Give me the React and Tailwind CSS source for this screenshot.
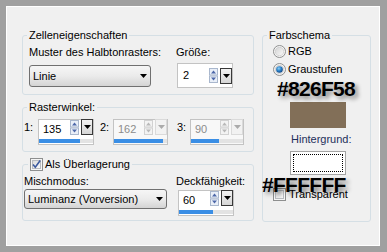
import React from "react";

function Tri({ color = "#000" }) {
  return (
    <svg width="7" height="4" viewBox="0 0 7 4">
      <path d="M0 0H7L3.5 4Z" fill={color} />
    </svg>
  );
}

function Spinner({ disabled }) {
  const bg = disabled ? "#f3f3f3" : "#e9eff8";
  const st = disabled ? "#d2d2d2" : "#a9b7cd";
  const ar = disabled ? "#b8b8b8" : "#4c67a8";
  return (
    <svg width="9" height="15" viewBox="0 0 9 15">
      <rect x="0.5" y="0.5" width="8" height="6.5" fill={bg} stroke={st} />
      <rect x="0.5" y="8" width="8" height="6.5" fill={bg} stroke={st} />
      <path d="M2 5.5L4.5 2.5L7 5.5Z" fill={ar} />
      <path d="M2 9.5L4.5 12.5L7 9.5Z" fill={ar} />
    </svg>
  );
}

function DropBtn({ disabled }) {
  return (
    <div
      className={
        disabled
          ? "w-[12px] h-[16px] flex items-center justify-center border border-[#dadada] bg-[#f2f2f2]"
          : "w-[12px] h-[16px] flex items-center justify-center border border-[#383838] bg-linear-to-b from-[#f2f2f2] to-[#d6d6d6]"
      }
    >
      <svg width="7" height="4" viewBox="0 0 7 4">
        <path d="M0 0H7L3.5 4Z" fill={disabled ? "#ababab" : "#000"} />
      </svg>
    </div>
  );
}

function BarField({ value, bar, disabled, width }) {
  return (
    <div
      className={
        (disabled ? "bg-[#f8f8f8] " : "bg-white ") +
        width +
        " h-[26px] border border-[#c3c3c3] flex flex-col"
      }
    >
      <div className="h-[19px] flex items-start">
        <div
          className={
            disabled
              ? "flex-1 h-full flex items-center pl-[4px] text-[#8c8c8c]"
              : "flex-1 h-full flex items-center pl-[4px] text-black"
          }
        >
          {value}
        </div>
        <Spinner disabled={disabled} />
        <div className="ml-[2px] -mt-[1px]">
          <DropBtn disabled={disabled} />
        </div>
      </div>
      <div className="h-[4px] bg-[#e3e3e3] flex">
        <div className={bar + " h-full bg-[#3a8ee5]"} />
      </div>
    </div>
  );
}

function SpinField({ value }) {
  return (
    <div className="w-[56px] h-[25px] border border-[#c3c3c3] bg-white flex items-center">
      <div className="flex-1 pl-[5px]">{value}</div>
      <Spinner />
      <div className="ml-[2px]">
        <DropBtn />
      </div>
    </div>
  );
}

function Combo({ cls, text }) {
  return (
    <div
      className={
        cls +
        " border border-[#707070] rounded-[3px] bg-linear-to-b from-[#f6f6f6] via-[#ebebeb] to-[#d4d4d4] flex items-center justify-between pl-[3px] pr-[3px]"
      }
    >
      <span>{text}</span>
      <Tri />
    </div>
  );
}

function CheckBox({ checked, id }) {
  return (
    <svg width="13" height="13" viewBox="0 0 13 13">
      <defs>
        <linearGradient id={id} x1="0" y1="0" x2="1" y2="1">
          <stop offset="0" stopColor="#d9d9d9" />
          <stop offset="1" stopColor="#fbfbfb" />
        </linearGradient>
      </defs>
      <rect x="0.5" y="0.5" width="12" height="12" fill="#f6f6f6" stroke="#8e8f8f" />
      <rect x="2.5" y="2.5" width="8" height="8" fill={`url(#${id})`} stroke="#b9bcc0" />
      {checked && (
        <path d="M3 6.5L5.3 9.2L10.2 2.6" fill="none" stroke="#3c5a9e" strokeWidth="1.6" />
      )}
    </svg>
  );
}

function Radio({ checked, id }) {
  return (
    <svg width="13" height="13" viewBox="0 0 13 13">
      <defs>
        <linearGradient id={id + "g"} x1="0" y1="0" x2="1" y2="1">
          <stop offset="0" stopColor="#d4d4d4" />
          <stop offset="1" stopColor="#fafafa" />
        </linearGradient>
        <radialGradient id={id + "r"} cx="0.4" cy="0.35" r="0.7">
          <stop offset="0" stopColor="#8fd0f5" />
          <stop offset="0.5" stopColor="#2a82c9" />
          <stop offset="1" stopColor="#0e3e7c" />
        </radialGradient>
      </defs>
      <circle cx="6.5" cy="6.5" r="6" fill="#f4f4f4" stroke="#8e8f8f" />
      <circle cx="6.5" cy="6.5" r="4.2" fill={`url(#${id}g)`} stroke="#c4c4c4" strokeWidth="0.6" />
      {checked && <circle cx="6.5" cy="6.5" r="3.3" fill={`url(#${id}r)`} />}
    </svg>
  );
}

const GROUP = "border border-[#d5dfe5] rounded-[3px]";

export default function App() {
  return (
    <div className="relative w-[387px] h-[252px] bg-[#a0a0a0] pt-[6px] pl-[6px] font-['Liberation_Sans',Arial,sans-serif] text-[11px] leading-[13px] text-black">
      <div className="w-[374px] h-[240px] bg-[#f0f0f0] shadow-[inset_1px_1px_0_#ffffff,inset_-1px_-1px_0_#ffffff] pt-[22px] pl-[16px] flex gap-[8px]">
        <div className="w-[232px] flex flex-col gap-[5px]">
          {/* Zelleneigenschaften */}
          <fieldset className={GROUP + " h-[67px]"}>
            <legend className="ml-[4px] px-[2px] leading-[14px]">Zelleneigenschaften</legend>
            <div className="pl-[6px] pt-[4px] flex">
              <div className="w-[147px]">
                <div>Muster des Halbtonrasters:</div>
                <div className="mt-[6px]">
                  <Combo cls="w-[122px] h-[22px]" text="Linie" />
                </div>
              </div>
              <div>
                <div>Größe:</div>
                <div className="mt-[4px] ml-[1px]">
                  <SpinField value="2" />
                </div>
              </div>
            </div>
          </fieldset>

          {/* Rasterwinkel */}
          <fieldset className={GROUP + " h-[52px]"}>
            <legend className="ml-[4px] px-[2px] leading-[14px]">Rasterwinkel:</legend>
            <div className="pl-[1px] pt-[5px] flex items-start">
              <div className="w-[14px] mt-[2px]">1:</div>
              <BarField value="135" bar="w-[41px]" width="w-[56px]" />
              <div className="w-[13px] ml-[6px] mt-[2px]">2:</div>
              <BarField value="162" bar="w-[49px]" width="w-[55px]" disabled />
              <div className="w-[13px] ml-[9px] mt-[2px]">3:</div>
              <BarField value="90" bar="w-[28px]" width="w-[54px]" disabled />
            </div>
          </fieldset>

          {/* Als Überlagerung */}
          <fieldset className={GROUP + " h-[64px]"}>
            <legend className="ml-[5px] px-[2px] leading-[14px]">
              <div className="flex items-center gap-[2px] h-[14px]">
                <CheckBox checked id="cb1" />
                <span>Als Überlagerung</span>
              </div>
            </legend>
            <div className="pl-[1px] pt-[4px] flex">
              <div className="w-[152px]">
                <div>Mischmodus:</div>
                <div className="mt-[1px]">
                  <Combo cls="w-[143px] h-[20px]" text="Luminanz (Vorversion)" />
                </div>
              </div>
              <div>
                <div>Deckfähigkeit:</div>
                <div className="mt-[2px] ml-[2px]">
                  <BarField value="60" bar="w-[34px]" width="w-[56px]" />
                </div>
              </div>
            </div>
          </fieldset>
        </div>

        {/* Farbschema */}
        <fieldset className={GROUP + " w-[109px] h-[194px]"}>
          <legend className="ml-[4px] px-[2px] leading-[14px]">Farbschema</legend>
          <div className="pl-[10px] pt-[3px] flex flex-col">
            <div className="flex items-center gap-[2px] h-[13px]">
              <Radio id="r1" />
              <span>RGB</span>
            </div>
            <div className="flex items-center gap-[2px] h-[13px] mt-[5px]">
              <Radio checked id="r2" />
              <span>Graustufen</span>
            </div>
            <div className="mt-[26px] ml-[17px] w-[56px] h-[26px] bg-[#826F58]" />
            <div className="mt-[5px] ml-[18px] text-[#1e2f5a]">Hintergrund:</div>
            <div className="mt-[5px] ml-[17px] w-[56px] h-[24px] border border-[#a3a3a3] bg-white p-[2px]">
              <div className="w-full h-full border border-dotted border-black" />
            </div>
            <div className="mt-[13px] flex items-center gap-[3px] h-[13px]">
              <CheckBox id="cb2" />
              <span>Transparent</span>
            </div>
          </div>
        </fieldset>
      </div>

      <div className="absolute left-[277px] top-[78px] font-bold text-[21px] leading-[21px] tracking-[-0.7px] text-black [text-shadow:3px_3px_4px_rgba(0,0,0,0.45)]">
        #826F58
      </div>
      <div className="absolute left-[262px] top-[174px] font-bold text-[21px] leading-[21px] tracking-[-0.7px] text-black [text-shadow:3px_3px_4px_rgba(0,0,0,0.45)]">
        #FFFFFF
      </div>
    </div>
  );
}
